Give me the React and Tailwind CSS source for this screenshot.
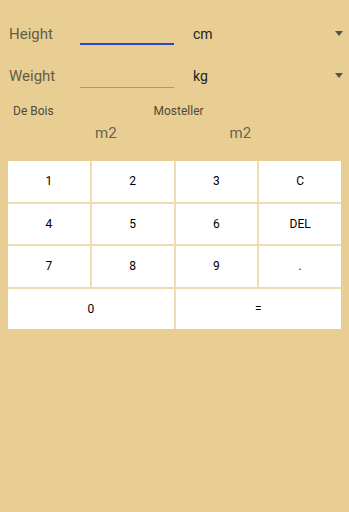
import { useState } from "react";

const keys = ["1", "2", "3", "C", "4", "5", "6", "DEL", "7", "8", "9", "."];

function Caret() {
  return (
    <svg width="8" height="5" viewBox="0 0 8 5" className="shrink-0">
      <path d="M0 0h8L4 5z" fill="#57524a" />
    </svg>
  );
}

function Field({ label, unit, active }) {
  return (
    <div className="flex items-start h-[21px]">
      <span className="w-[71px] text-[15px] leading-[18px] text-[#645c48]">
        {label}
      </span>
      <div
        className={
          active
            ? "w-[94px] h-[20px] border-b-2 border-[#2a48c9]"
            : "w-[94px] h-[21px] border-b border-[#a8997a]"
        }
      />
      <span className="ml-[19px] text-[14px] leading-[18px] text-[#222]">
        {unit}
      </span>
      <div className="ml-auto mr-[-3px] pt-[6px]">
        <Caret />
      </div>
    </div>
  );
}

export default function App() {
  const [display] = useState({ bois: "", mosteller: "" });

  return (
    <div
      className="w-[349px] h-[512px] bg-[#e8ce92] overflow-hidden"
      style={{ fontFamily: "Roboto, 'Liberation Sans', sans-serif" }}
    >
      <div className="px-[9px] pt-[25px] flex flex-col gap-[21px]">
        <Field label="Height" unit="cm" active />
        <Field label="Weight" unit="kg" />
      </div>

      <div className="mt-[16px] grid grid-cols-2 text-[12px] leading-[14px] text-[#4f4a3d]">
        <span className="pl-[13px]">De Bois</span>
        <span className="ml-[-21px]">Mosteller</span>
      </div>

      <div className="mt-[6px] grid grid-cols-2 text-[15px] leading-[18px] text-[#6b634f]">
        <span className="pl-[95px]">{display.bois}m2</span>
        <span className="pl-[55px]">{display.mosteller}m2</span>
      </div>

      <div className="mt-[19px] mx-[8px] grid grid-cols-4 auto-rows-[40.5px] gap-[2px] bg-[#efdcb2] text-[12px] text-black">
        {keys.map((k) => (
          <button key={k} className="bg-white flex items-center justify-center">
            {k}
          </button>
        ))}
        <button className="col-span-2 bg-white flex items-center justify-center">
          0
        </button>
        <button className="col-span-2 bg-white flex items-center justify-center">
          =
        </button>
      </div>
    </div>
  );
}
